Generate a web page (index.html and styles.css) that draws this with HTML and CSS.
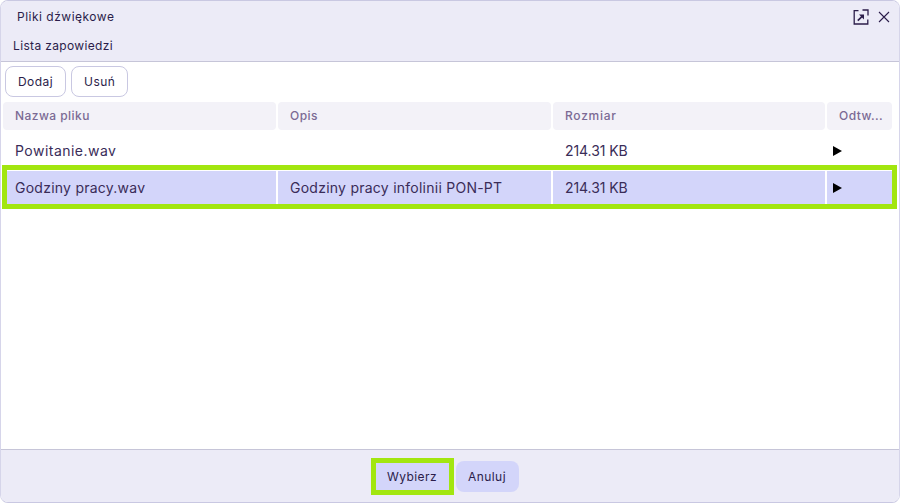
FILE: index.html
```html
<!DOCTYPE html>
<html lang="pl">
<head>
<meta charset="utf-8">
<title>Pliki dźwiękowe</title>
<link rel="stylesheet" href="styles.css">
</head>
<body>
<div class="dialog">
  <header class="head">
    <div class="title-row">
      <span class="title">Pliki dźwiękowe</span>
      <div class="win-icons">
        <svg class="ico" width="16" height="16" viewBox="0 0 16 16" fill="none" stroke="#2b1d4a" stroke-width="1.3"><path d="M5.5 1.7H1.2V15H14.8V10.5"/><path d="M9.5 1H15V6.5"/><path d="M4.8 11.6L9.5 7" stroke-width="1.7"/><path d="M6 5.4H11V10.4Z" fill="#2b1d4a" stroke="none"/></svg>
        <svg class="ico" width="12" height="12" viewBox="0 0 12 12" fill="none" stroke="#2b1d4a" stroke-width="1.1"><path d="M1 1L11 11M11 1L1 11"/></svg>
      </div>
    </div>
    <div class="subtitle">Lista zapowiedzi</div>
  </header>
  <div class="toolbar">
    <button class="btn">Dodaj</button>
    <button class="btn">Usuń</button>
  </div>
  <main class="list">
    <div class="row row-head">
      <div class="cell">Nazwa pliku</div>
      <div class="cell">Opis</div>
      <div class="cell cell-size-head">Rozmiar</div>
      <div class="cell">Odtw...</div>
    </div>
    <div class="row row-plain">
      <div class="cell cell-name">Powitanie.wav</div>
      <div class="cell"></div>
      <div class="cell cell-size">214.31 KB</div>
      <div class="cell cell-play"><svg class="play" width="9" height="10" viewBox="0 0 9 10"><path d="M0 0L9 5L0 10Z"/></svg></div>
    </div>
    <div class="row row-selected">
      <div class="cell">Godziny pracy.wav</div>
      <div class="cell">Godziny pracy infolinii PON-PT</div>
      <div class="cell cell-size">214.31 KB</div>
      <div class="cell cell-play"><svg class="play" width="9" height="10" viewBox="0 0 9 10"><path d="M0 0L9 5L0 10Z"/></svg></div>
    </div>
  </main>
  <footer class="foot">
    <button class="action action-marked">Wybierz</button>
    <button class="action">Anuluj</button>
  </footer>
</div>
</body>
</html>
```
FILE: styles.css
```css
* { box-sizing: border-box; }
html, body { margin: 0; height: 100%; }
body {
  background: #fff;
  font-family: "Inter", "Noto Sans", sans-serif;
  color: #2b1d4a;
  overflow: hidden;
}
.dialog {
  height: 503px;
  display: flex;
  flex-direction: column;
  border: 1px solid #d6d5ea;
  border-top-color: #c9c8e2;
  border-bottom-color: #c9c8e2;
  border-radius: 8px;
  overflow: hidden;
}
.head {
  height: 61px;
  flex: none;
  background: #ecebf7;
  border-bottom: 1px solid #c6c5d8;
  padding: 0 0 0 12px;
}
.title-row {
  height: 31px;
  display: flex;
  align-items: center;
  justify-content: space-between;
  padding: 0 9px 0 4px;
}
.title { font-size: 12px; font-weight: 400; letter-spacing: .5px; }
.win-icons { display: flex; align-items: center; gap: 9px; }
.ico { display: block; }
.subtitle { font-size: 12px; font-weight: 400; letter-spacing: .35px; line-height: 27px; }
.toolbar {
  flex: none;
  display: flex;
  gap: 5px;
  padding: 4px 4px 0;
  height: 40px;
}
.btn {
  height: 31px;
  padding: 0 12px;
  background: #fff;
  border: 1px solid #c9c8e2;
  border-radius: 8px;
  font: 400 12px "Inter", sans-serif;
  letter-spacing: .45px;
  color: #2b1d4a;
}
.list { flex: 1; padding: 0 5px 0 2px; }
.row {
  display: grid;
  grid-template-columns: 273px 273px 272px 65px;
  column-gap: 2px;
  position: relative;
}
.cell {
  padding-left: 12px;
  display: flex;
  align-items: center;
  white-space: nowrap;
}
.cell-play { padding-left: 6px; }
.cell-name { letter-spacing: .48px; }
.cell-size { letter-spacing: -.08px; }
.cell-size-head { letter-spacing: .75px; }
.row-head { height: 28px; padding-bottom: 0; font-size: 12px; font-weight: 500; color: #7b6a94; letter-spacing: .45px; }
.row-head .cell { background: #f3f2f8; border-radius: 4px; padding-bottom: 2px; }
.row-plain { height: 39px; margin-top: 2px; font-size: 14px; letter-spacing: .25px; color: #3a2c58; padding-bottom: 2px; }
.row-selected {
  height: 44px;
  margin-top: -6px;
  font-size: 14px;
  letter-spacing: .25px;
  color: #3a2c58;
  padding: 6px 0 5px;
}
.row-selected .cell { background: #d3d5fa; }
.row-selected::after {
  content: "";
  position: absolute;
  inset: 0 -3px 0 -1px;
  border: 5px solid #a2e60f;
  pointer-events: none;
}
.play { display: block; fill: #000; }
.foot {
  flex: none;
  height: 53px;
  background: #ecebf7;
  border-top: 1px solid #c6c5d8;
  display: flex;
  align-items: center;
  justify-content: center;
  gap: 2px;
  padding-right: 11px;
}
.action {
  height: 31px;
  width: 63px;
  padding: 0;
  background: #d3d5fa;
  border: 0;
  border-radius: 8px;
  font: 400 12px "Inter", sans-serif;
  letter-spacing: .45px;
  color: #2b1d4a;
}
.action-marked {
  height: 37px;
  width: 83px;
  border: 5px solid #a2e60f;
  border-radius: 0;
}
```
